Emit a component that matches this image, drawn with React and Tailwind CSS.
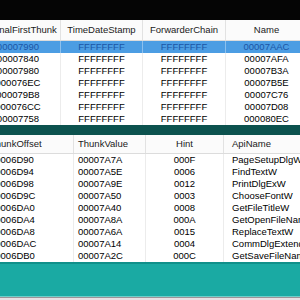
import React from 'react';

const upperRows = [
  ['00007990', 'FFFFFFFF', 'FFFFFFFF', '00007AAC'],
  ['00007840', 'FFFFFFFF', 'FFFFFFFF', '00007AFA'],
  ['00007980', 'FFFFFFFF', 'FFFFFFFF', '00007B3A'],
  ['000076EC', 'FFFFFFFF', 'FFFFFFFF', '00007B5E'],
  ['000079B8', 'FFFFFFFF', 'FFFFFFFF', '00007C76'],
  ['000076CC', 'FFFFFFFF', 'FFFFFFFF', '00007D08'],
  ['00007758', 'FFFFFFFF', 'FFFFFFFF', '000080EC'],
];

const lowerRows = [
  ['00006D90', '00007A7A', '000F', 'PageSetupDlgW'],
  ['00006D94', '00007A5E', '0006', 'FindTextW'],
  ['00006D98', '00007A9E', '0012', 'PrintDlgExW'],
  ['00006D9C', '00007A50', '0003', 'ChooseFontW'],
  ['00006DA0', '00007A40', '0008', 'GetFileTitleW'],
  ['00006DA4', '00007A8A', '000A', 'GetOpenFileNameW'],
  ['00006DA8', '00007A6A', '0015', 'ReplaceTextW'],
  ['00006DAC', '00007A14', '0004', 'CommDlgExtendedError'],
  ['00006DB0', '00007A2C', '000C', 'GetSaveFileNameW'],
];

const upperHeads = ['OriginalFirstThunk', 'TimeDateStamp', 'ForwarderChain', 'Name'];
const upperW = ['w-[85px]', 'w-[82px]', 'w-[83px]', 'w-[82px]'];
const lowerHeads = ['ThunkOffset', 'ThunkValue', 'Hint', 'ApiName'];

const App = () => {
  return (
    <div className="w-[300px] h-[300px] overflow-hidden bg-white flex flex-col text-[9.5px] text-black" style={{ fontFamily: '"Liberation Sans", Arial, sans-serif' }}>
      <div className="h-[20px] bg-[#050505] shrink-0"></div>

      {/* import descriptors */}
      <div className="flex flex-col shrink-0 ml-[-24px] w-[340px]">
        <div className="h-[21px] flex bg-[#fbfbfb] border-b border-[#dcdcdc]">
          {upperHeads.map((h, j) => (
            <div key={h} className={`${upperW[j]} shrink-0 flex items-center justify-center border-r border-[#e2e2e2] text-[#1a1a1a]`}>{h}</div>
          ))}
        </div>
        {upperRows.map((r, i) => (
          <div key={i} className={`h-[12px] flex leading-none ${i === 0 ? 'bg-[#4c9de3] text-[#1b56a6]' : ''}`}>
            {r.map((c, j) => (
              <div key={j} className={`${upperW[j]} shrink-0 flex items-center justify-center border-r ${i === 0 ? 'border-[#8cc0ee]' : 'border-[#ececec]'}`}>{c}</div>
            ))}
          </div>
        ))}
      </div>

      <div className="h-[10px] bg-[#0c524e] shrink-0"></div>

      {/* thunks */}
      <div className="flex flex-col shrink-0 ml-[-14px] w-[360px]">
        <div className="h-[19px] flex bg-[#fbfbfb] border-b border-[#dcdcdc] text-[#1a1a1a]">
          <div className="w-[88px] shrink-0 flex items-center pl-[4px] border-r border-[#e2e2e2]">{lowerHeads[0]}</div>
          <div className="w-[72px] shrink-0 flex items-center pl-[4px] border-r border-[#e2e2e2]">{lowerHeads[1]}</div>
          <div className="w-[78px] shrink-0 flex items-center justify-center border-r border-[#e2e2e2]">{lowerHeads[2]}</div>
          <div className="w-[120px] shrink-0 flex items-center pl-[8px]">{lowerHeads[3]}</div>
        </div>
        {lowerRows.map((r, i) => (
          <div key={i} className="h-[12px] flex leading-none">
            <div className="w-[88px] shrink-0 flex items-center pl-[4px] border-r border-[#ececec]">{r[0]}</div>
            <div className="w-[72px] shrink-0 flex items-center pl-[4px] border-r border-[#ececec]">{r[1]}</div>
            <div className="w-[78px] shrink-0 flex items-center justify-center border-r border-[#ececec]">{r[2]}</div>
            <div className="w-[120px] shrink-0 flex items-center pl-[8px] whitespace-nowrap">{r[3]}</div>
          </div>
        ))}
      </div>

      <div className="flex-1 flex flex-col">
        <div className="h-[2px] bg-[#10908a]"></div>
        <div className="flex-1 bg-[#1aaaa3]"></div>
        <div className="h-[1px] bg-[#6fcfca]"></div>
        <div className="h-[1px] bg-[#9c9497]"></div>
        <div className="h-[2px] bg-[#e9e1e4]"></div>
      </div>
    </div>
  );
};

export default App;
